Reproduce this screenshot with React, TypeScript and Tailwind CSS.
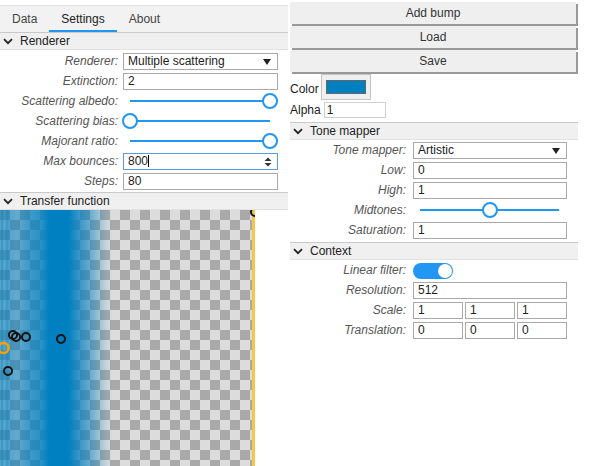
import React from 'react';

function Chevron() {
  return (
    <svg width="10" height="7" viewBox="0 0 10 7" className="shrink-0">
      <path d="M1 1.2 L5 5.2 L9 1.2" fill="none" stroke="#222" strokeWidth="1.8" />
    </svg>
  );
}

function Header({ title }: { title: string }) {
  return (
    <div className="flex items-center gap-[7px] h-[18px] pl-[3px] bg-[#f0f0f0] border-t border-b border-t-[#c8c8c8] border-b-[#e2e2e2] text-[12px] text-[#222]">
      <Chevron />
      <span>{title}</span>
    </div>
  );
}

function Label({ children }: { children: React.ReactNode }) {
  return <div className="text-right italic text-[#555] leading-[17px] whitespace-nowrap">{children}</div>;
}

function Field({ value, focused }: { value: string; focused?: boolean }) {
  return (
    <div
      className={`relative h-[17px] bg-white pl-[4px] leading-[15px] text-[12px] text-[#222] border ${
        focused ? 'border-[#5b9be0]' : 'border-[#a9a9a9]'
      }`}
    >
      {value}
      {focused && (
        <>
          <span className="inline-block w-px h-[12px] bg-black align-[-2px]" />
          <svg width="8" height="10" viewBox="0 0 8 10" className="absolute right-[5px] top-[3px]">
            <path d="M4 0.5 L7.5 4 L0.5 4 Z" fill="#333" />
            <path d="M4 9.5 L7.5 6 L0.5 6 Z" fill="#333" />
          </svg>
        </>
      )}
    </div>
  );
}

function Select({ value }: { value: string }) {
  return (
    <div className="relative h-[17px] bg-white pl-[4px] leading-[15px] text-[12px] text-[#222] border border-[#a9a9a9]">
      {value}
      <svg width="8" height="6" viewBox="0 0 8 6" className="absolute right-[6px] top-[5px]">
        <path d="M0 0 L8 0 L4 6 Z" fill="#222" />
      </svg>
    </div>
  );
}

function Slider({ value }: { value: number }) {
  return (
    <div className="relative h-[17px]">
      <div className="absolute left-[7px] right-[8px] top-[7px] h-[2px] bg-[#2196f3]">
        <div
          className="absolute top-[-7px] w-[16px] h-[16px] -ml-[8px] rounded-full border-[2.5px] border-[#2196f3] bg-white"
          style={{ left: `${value * 100}%` }}
        />
      </div>
    </div>
  );
}

function Toggle() {
  return (
    <div className="h-[17px] flex items-center">
      <div className="w-[40px] h-[16px] rounded-full bg-[#2196f3] flex items-center justify-end pr-[1px]">
        <div className="w-[14px] h-[14px] rounded-full bg-white" />
      </div>
    </div>
  );
}

function TransferCanvas() {
  const stops: [number, number][] = [
    [0, 0.55], [2, 0.8], [4, 0.55], [7, 0.75], [10, 0.6], [17, 0.55], [28, 0.7],
    [42, 0.82], [49, 1], [68, 1], [78, 0.78], [88, 0.58], [98, 0.32], [107, 0.08], [113, 0],
  ];
  const dots: [number, number][] = [[13, 125], [16, 127], [26, 127], [61, 129], [8, 161]];
  return (
    <svg width="255" height="256" viewBox="0 0 255 256" className="block shrink-0">
      <defs>
        <pattern id="chk" width="20" height="20" patternUnits="userSpaceOnUse">
          <rect width="20" height="20" fill="#dcdcdc" />
          <rect width="10" height="10" fill="#a9a9a9" />
          <rect x="10" y="10" width="10" height="10" fill="#a9a9a9" />
        </pattern>
        <linearGradient id="tf" x1="0" y1="0" x2="255" y2="0" gradientUnits="userSpaceOnUse">
          {stops.map(([x, a]) => (
            <stop key={x} offset={x / 255} stopColor="#0080c0" stopOpacity={a} />
          ))}
        </linearGradient>
      </defs>
      <rect width="255" height="256" fill="url(#chk)" />
      <rect width="255" height="256" fill="url(#tf)" />
      <rect x="252" width="3" height="256" fill="#f6c54a" />
      <circle cx="255" cy="2" r="4" fill="none" stroke="#111" strokeWidth="2" />
      {dots.map(([x, y], i) => (
        <circle key={i} cx={x} cy={y} r="4" fill="none" stroke="#111" strokeWidth="2" />
      ))}
      <circle cx="3.5" cy="138" r="5" fill="none" stroke="#ffa000" strokeWidth="2.5" />
    </svg>
  );
}

export default function App() {
  return (
    <div className="w-[600px] h-[466px] overflow-hidden bg-white flex gap-[2px] font-['Liberation_Sans',Arial,sans-serif] text-[12px] text-[#222]">
      {/* left panel */}
      <div className="w-[288px] flex flex-col">
        <div className="mt-[5px] h-[27px] border-t border-[#e0e0e0] bg-[#f2f2f2] flex text-[#444]">
          <div className="px-3 flex items-center">Data</div>
          <div className="px-3 flex items-center border-b-2 border-[#2196f3] pt-[2px] text-[#222]">Settings</div>
          <div className="px-3 flex items-center">About</div>
        </div>
        <Header title="Renderer" />
        <div className="grid grid-cols-[118px_155px] gap-x-[5px] gap-y-[3px] pt-[3px] pb-[2px]">
          <Label>Renderer:</Label>
          <Select value="Multiple scattering" />
          <Label>Extinction:</Label>
          <Field value="2" />
          <Label>Scattering albedo:</Label>
          <Slider value={1} />
          <Label>Scattering bias:</Label>
          <Slider value={0} />
          <Label>Majorant ratio:</Label>
          <Slider value={1} />
          <Label>Max bounces:</Label>
          <Field value="800" focused />
          <Label>Steps:</Label>
          <Field value="80" />
        </div>
        <Header title="Transfer function" />
        <TransferCanvas />
      </div>

      {/* right panel */}
      <div className="w-[288px] flex flex-col">
        <div className="pt-[2px] flex flex-col gap-[2px]">
          {['Add bump', 'Load', 'Save'].map((b) => (
            <div key={b} className="w-[286px] h-[22px] bg-[#efefef] shadow-[2px_2px_0_#999] flex items-center justify-center text-[#333]">
              {b}
            </div>
          ))}
        </div>
        <div className="flex items-end h-[26px] mt-[2px]">
          <span className="mb-[3px] leading-[16px]">Color</span>
          <div className="ml-[2px] w-[50px] h-[26px] bg-[#efefef] border border-[#c4c4c4] flex items-center justify-center">
            <div className="w-[40px] h-[14px] bg-[#0080c0] border border-[#666]" />
          </div>
        </div>
        <div className="flex items-center h-[16px] mt-[2px]">
          <span className="leading-[16px]">Alpha</span>
          <div className="ml-[3px] w-[62px] h-[16px] border border-[#d0d0d0] pl-[2px] leading-[14px]">1</div>
        </div>
        <div className="mt-[4px]">
          <Header title="Tone mapper" />
        </div>
        <div className="grid grid-cols-[116px_154px] gap-x-[7px] gap-y-[3px] pt-[2px] pb-[3px]">
          <Label>Tone mapper:</Label>
          <Select value="Artistic" />
          <Label>Low:</Label>
          <Field value="0" />
          <Label>High:</Label>
          <Field value="1" />
          <Label>Midtones:</Label>
          <Slider value={0.5} />
          <Label>Saturation:</Label>
          <Field value="1" />
        </div>
        <Header title="Context" />
        <div className="grid grid-cols-[116px_154px] gap-x-[7px] gap-y-[3px] pt-[2px]">
          <Label>Linear filter:</Label>
          <Toggle />
          <Label>Resolution:</Label>
          <Field value="512" />
          <Label>Scale:</Label>
          <div className="grid grid-cols-3 gap-[2px]">
            <Field value="1" />
            <Field value="1" />
            <Field value="1" />
          </div>
          <Label>Translation:</Label>
          <div className="grid grid-cols-3 gap-[2px]">
            <Field value="0" />
            <Field value="0" />
            <Field value="0" />
          </div>
        </div>
      </div>
    </div>
  );
}
